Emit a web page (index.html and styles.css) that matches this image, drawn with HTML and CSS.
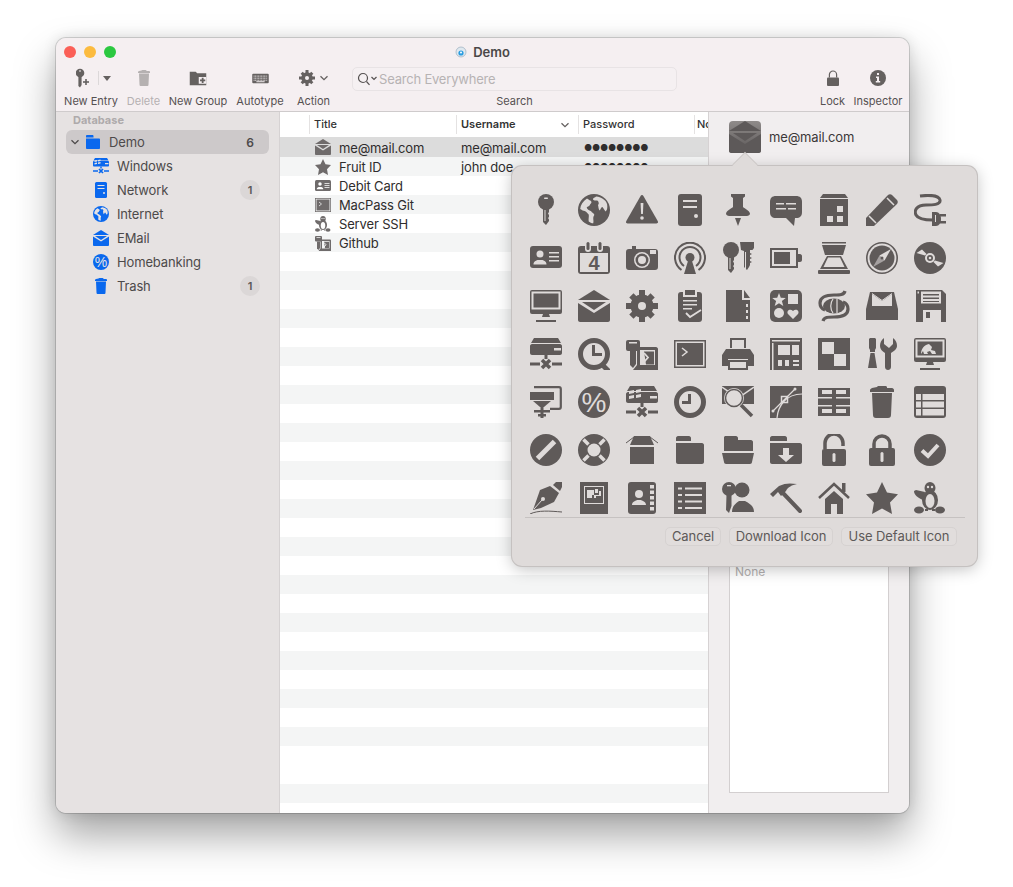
FILE: index.html
```html
<!DOCTYPE html>
<html lang="en">
<head>
<meta charset="utf-8">
<title>Demo</title>
<link rel="stylesheet" href="styles.css">
</head>
<body>
<svg class="defs" xmlns="http://www.w3.org/2000/svg">
<symbol id="key" viewBox="0 0 32 32"><circle cx="16" cy="8" r="8"/><path d="M13 14h6v4l-1 1.500 1 1.500v2l-1 1 1 1.500v1.500l-3 4-3-3z"/><rect class="cut" x="14" y="3.500" width="4" height="1.500" rx=".7"/><rect class="cut" x="14.500" y="16" width="1" height="11"/></symbol>
<symbol id="globe" viewBox="0 0 32 32"><circle cx="16" cy="16" r="16"/><path class="cut" d="M9 4.500C5 7 2.500 11 2.200 15c2 1 3 2 4.500 2 2 1 3 2.500 4 3.500.5 2-.5 4 0 7 1 .8 3 1.800 4.500 1.800 1-3-1-5 1-8 .5-2-2-2-3-4-2-1-4.500-2-4.500-4 1-1 3-1 3.500-3 1-1 2-2 .5-3.500C11 6 10 5 9 4.500zM18 2.500c-1 1.500-3 1-3 3 2 2 3 0 5 1.500 1 2 1 3 0 4 .5 2 .5 4 1.500 5.500 1.500-1 1-3 3-3.500 1 1.500 2 3 3 4.500 1.500-1 1.800-3 1.800-5C29.800 7 24 3 18 2.500z"/></symbol>
<symbol id="warn" viewBox="0 0 32 32"><path d="M16 1c.7 0 1 .4 1.400 1L31.700 27c.7 1.400.2 2.500-1.300 2.500H1.600C.1 29.500-.4 28.400.3 27L14.600 2c.4-.6.7-1 1.400-1z"/><path class="cut" d="M14.600 9h2.800l-.5 11h-1.800z"/><circle class="cut" cx="16" cy="24" r="1.800"/></symbol>
<symbol id="server" viewBox="0 0 32 32"><rect x="4" y="0" width="24" height="32" rx="3"/><rect class="cut" x="9" y="6" width="14" height="2"/><rect class="cut" x="9" y="12" width="14" height="2"/><circle class="cut" cx="22" cy="22" r="2"/></symbol>
<symbol id="pin" viewBox="0 0 32 32"><path d="M9 0h14v2.500l-2 1.500v9c2 2 6 3 7 6.500 0 2-2 2.500-5 2.500H9c-3 0-5-.5-5-2.500 1-3.500 5-4.500 7-6.500V4L9 2.500zM13 24h6l-3 8z"/></symbol>
<symbol id="chat" viewBox="0 0 32 32"><path d="M6 2h20c4 0 6 2 6 6v10c0 4-2 6-6 6h-1l-1 8-8-8H6c-4 0-6-2-6-6V8c0-4 2-6 6-6z"/><rect class="cut" x="6" y="9" width="8" height="1.500"/><rect class="cut" x="16" y="9" width="10" height="1.500"/><rect class="cut" x="6" y="14" width="10" height="1.500"/><rect class="cut" x="18" y="14" width="8" height="1.500"/></symbol>
<symbol id="build" viewBox="0 0 32 32"><path d="M5 0h22l3 4H2zM2 5h28v27H2z"/><rect class="cut" x="19" y="12" width="6" height="6"/><rect class="cut" x="9" y="22" width="6" height="6"/><rect class="cut" x="19" y="22" width="6" height="6"/></symbol>
<symbol id="pencil" viewBox="0 0 32 32"><path d="M0 32v-8L22 1c1-1 3-1 4 0l5 5c1 1 1 3 0 4L8 32z"/><path class="cln" d="M21 4l7 7M3 22l7 7" stroke-width="1.500" fill="none"/></symbol>
<symbol id="plug" viewBox="0 0 32 32"><path class="ln" d="M6 2c8-1 19-1 20 4 1 5-8 5-14 5C2 11 0 17 2 21c2 4 8 5 17 5" stroke-width="3" fill="none"/><path d="M18 18h4c3 0 5 3 5 7s-2 7-5 7h-4z"/><rect x="26" y="20" width="6" height="2.500"/><rect x="26" y="27" width="6" height="2.500"/><rect class="cut" x="21" y="21" width="1" height="7"/></symbol>
<symbol id="idcard" viewBox="0 0 32 32"><rect x="0" y="4" width="32" height="22" rx="3"/><circle class="cut" cx="10" cy="12" r="3.500"/><path class="cut" d="M3.500 22.500c0-3 2-3.500 4-4.500h5c2 1 4 1.500 4 4.500z"/><rect class="cut" x="19" y="10" width="10" height="1.500"/><rect class="cut" x="19" y="14" width="10" height="1.500"/><rect class="cut" x="19" y="18" width="10" height="1.500"/></symbol>
<symbol id="cal" viewBox="0 0 32 32"><rect x="0" y="4" width="32" height="28" rx="3"/><rect class="cut" x="2" y="11" width="28" height="19"/><rect class="cut" x="7" y="0" width="6" height="10" rx="3"/><rect class="cut" x="19" y="0" width="6" height="10" rx="3"/><rect x="8.500" y="0" width="3" height="8" rx="1.500"/><rect x="20.500" y="0" width="3" height="8" rx="1.500"/><text x="16" y="28" class="ict" font-size="20">4</text></symbol>
<symbol id="camera" viewBox="0 0 32 32"><path d="M6 4h4v3h19c2 0 3 1 3 3v15c0 2-1 3-3 3H3c-2 0-3-1-3-3V10c0-2 1-3 3-3h3z"/><circle class="cut" cx="16" cy="18" r="8"/><circle cx="16" cy="18" r="6.500"/><circle class="cut" cx="16" cy="18" r="4"/><rect class="cut" x="24" y="8" width="6" height="4"/></symbol>
<symbol id="cast" viewBox="0 0 32 32"><path class="ln" d="M7.500 28A15 15 0 1 1 24.500 28" stroke-width="2" fill="none"/><path class="ln" d="M10 24A10.500 10.500 0 1 1 22 24" stroke-width="2" fill="none"/><circle cx="16" cy="15.500" r="4.500"/><path d="M14 19h4l4 13H10z"/></symbol>
<symbol id="keys" viewBox="0 0 32 32"><circle cx="9" cy="8" r="8"/><path d="M6 14h6v4l-1 1.500 1 1.500v2l-1 1 1 1.500v1.500l-3 4-3-3z"/><path d="M18 0h14v6l-1.500 2H28v3l2 1-2 1v2l2 1-2 1v2l2 1-2 1v2l-1 2-2 3-3-3V9l-3-1z"/><rect class="cut" x="7.500" y="16" width="1" height="11"/><rect class="cut" x="23" y="10" width="1" height="17"/></symbol>
<symbol id="batt" viewBox="0 0 32 32"><path fill-rule="evenodd" d="M0 6h28v20H0zM2 8v16h24V8z"/><rect x="4" y="10" width="16" height="12"/><path d="M28 12h2c1 0 2 1 2 2v4c0 1-1 2-2 2h-2z"/></symbol>
<symbol id="scan" viewBox="0 0 32 32"><rect x="4" y="0" width="24" height="1.500"/><path d="M4 3h24l-3 10H7z"/><path fill-rule="evenodd" d="M9 14h14l7 13H2zM10 15.500L5.500 25h21L22 15.500z"/><rect x="0" y="28" width="32" height="4" rx="1"/></symbol>
<symbol id="compass" viewBox="0 0 32 32"><circle class="ln" cx="16" cy="16" r="15.200" stroke-width="1.600" fill="none"/><circle cx="16" cy="16" r="12.500"/><path class="cut" d="M25 7l-6.500 11.500-5-5z"/><path class="cut" d="M7 25l6.500-11.500 5 5z" opacity=".55"/><circle cx="16" cy="16" r="1.500"/></symbol>
<symbol id="disc" viewBox="0 0 32 32"><circle cx="16" cy="16" r="16"/><path class="cut" d="M2.500 11L8 7.500l4.500 4.500L11 13.500zM29.500 21L24 24.500 19.500 20l1.500-1.500z"/><circle class="cut" cx="16" cy="16" r="5"/><circle cx="16" cy="16" r="3"/><circle class="cut" cx="16" cy="16" r="1.300"/></symbol>
<symbol id="mon" viewBox="0 0 32 32"><rect x="0" y="0" width="32" height="24" rx="2"/><rect class="cut" x="1.500" y="1.500" width="29" height="18"/><rect x="3.500" y="3.500" width="25" height="14"/><path d="M13 24h6l1 3h-8z"/><rect x="6" y="30" width="20" height="2"/></symbol>
<symbol id="env" viewBox="0 0 32 32"><path d="M16 0l16 10H0z"/><path d="M4 12h24L16 20z"/><path d="M0 13l16 10 16-10v17c0 1-1 2-2 2H2c-1 0-2-1-2-2z"/></symbol>
<symbol id="gear" viewBox="0 0 32 32"><circle cx="16" cy="16" r="11.500"/><rect x="13" y="0" width="6" height="32"/><rect x="0" y="13" width="32" height="6"/><rect x="13" y="1" width="6" height="30" transform="rotate(45 16 16)"/><rect x="13" y="1" width="6" height="30" transform="rotate(-45 16 16)"/><circle class="cut" cx="16" cy="16" r="4"/></symbol>
<symbol id="clip" viewBox="0 0 32 32"><rect x="4" y="2" width="24" height="30" rx="3"/><rect class="cut" x="9" y="0" width="14" height="7"/><rect x="11" y="0" width="10" height="5"/><rect class="cut" x="9" y="10" width="14" height="1.500"/><rect class="cut" x="9" y="14" width="14" height="1.500"/><rect class="cut" x="9" y="18" width="9" height="1.500"/><path class="cln" d="M12 23l4 4 11-7" stroke-width="1.800" fill="none"/></symbol>
<symbol id="doc" viewBox="0 0 32 32"><path d="M4 0h16v10h8v22H4zM22 0l6 8h-6z"/><rect class="cut" x="24" y="14" width="2" height="3"/><rect class="cut" x="24" y="20" width="2" height="3"/><rect class="cut" x="24" y="26" width="2" height="3"/></symbol>
<symbol id="tile" viewBox="0 0 32 32"><rect width="32" height="32" rx="5"/><path class="cut" d="M9 3l1.800 4.800 5 .2-3.900 3.100 1.400 4.900L9 13.200 4.700 16l1.400-4.900L2.200 8l5-.2z"/><rect class="cut" x="18" y="4" width="10" height="10"/><circle class="cut" cx="9" cy="23" r="5"/><path class="cut" d="M23 29l-5-5c-2-3 2-6 5-3 3-3 7 0 5 3z"/></symbol>
<symbol id="swirl" viewBox="0 0 32 32"><path class="ln" d="M27 1c-1 4-5 4-11 4C7 5 2 8 2 13c0 3 2 6 5 7" stroke-width="3.200" fill="none"/><path class="ln" d="M5 31c1-4 5-4 11-4 9 0 14-3 14-8 0-3-2-6-5-7" stroke-width="3.200" fill="none"/><ellipse cx="16" cy="16" rx="11" ry="7.500"/><path class="cln" d="M15 9c-3 4-3 10 0 14M19 9v14" stroke-width="1.200" fill="none"/></symbol>
<symbol id="tray" viewBox="0 0 32 32"><path d="M4 2h24l4 17v11H0V19z"/><path class="cut" d="M6 4l10 7 10-7v12H6z"/><path class="cln" d="M6 3.500l10 7 10-7" stroke-width="1" fill="none"/></symbol>
<symbol id="floppy" viewBox="0 0 32 32"><path d="M2 0h26l4 4v28H2z"/><rect class="cut" x="7" y="1.500" width="20" height="12"/><rect x="9" y="4" width="16" height="1.500"/><rect x="9" y="7.500" width="16" height="1.500"/><rect x="9" y="11" width="16" height="1"/><rect class="cut" x="9" y="20" width="18" height="12"/><rect x="12" y="22" width="4" height="6"/><rect class="cut" x="3.500" y="1.500" width="1.500" height="2"/></symbol>
<symbol id="hddx" viewBox="0 0 32 32"><path d="M4 0h24l3 5H1z"/><path d="M2 6h28c1 0 2 1 2 2v7c0 1-1 2-2 2H2c-1 0-2-1-2-2V8c0-1 1-2 2-2z"/><rect class="cut" x="24" y="10" width="7" height="2.500"/><rect x="14.500" y="17" width="3" height="4"/><rect x="0" y="24.500" width="10" height="3"/><rect x="22" y="24.500" width="10" height="3"/><path class="ln" d="M12 22l8 8M20 22l-8 8" stroke-width="3.500" fill="none"/></symbol>
<symbol id="qclock" viewBox="0 0 32 32"><circle class="ln" cx="16" cy="16" r="13.500" stroke-width="5" fill="none"/><rect x="14" y="7" width="3" height="11"/><rect x="14" y="15" width="10" height="3"/><path d="M26 25l6 6v1h-6l-4-4z"/></symbol>
<symbol id="keyterm" viewBox="0 0 32 32"><rect x="0" y="2" width="14" height="11" rx="2"/><rect class="cut" x="3" y="4" width="8" height="1.500"/><path d="M4 13h6v13l-3 4-3-3z"/><path fill-rule="evenodd" d="M11 9h19c1 0 2 1 2 2v21H7l4-5zM14 12v15h15V12z"/><path d="M18 13.500h10v13H20z"/><path class="cln" d="M18 15l4 4.500-4 4.500" stroke-width="1.800" fill="none"/></symbol>
<symbol id="term" viewBox="0 0 32 32"><path fill-rule="evenodd" d="M0 2h32v28H0zM1.500 3.500v25h29v-25z"/><rect x="3" y="5" width="26" height="22"/><path class="cln" d="M8 10l5 4-5 4" stroke-width="1.500" fill="none"/></symbol>
<symbol id="printer" viewBox="0 0 32 32"><path class="ln" d="M9 10V1h14v9" stroke-width="2" fill="none"/><path d="M4 11h24l4 6v11h-6V21H6v7H0V17z"/><path fill-rule="evenodd" d="M6 22h20v10H6zM8 24v6h16v-6z"/></symbol>
<symbol id="grid" viewBox="0 0 32 32"><rect width="32" height="32"/><rect class="cut" x="2" y="2" width="28" height="1.500"/><rect class="cut" x="2" y="5" width="1.500" height="27"/><rect class="cut" x="8" y="7" width="12" height="10"/><rect class="cut" x="22" y="7" width="7" height="10"/><rect class="cut" x="8" y="22" width="4" height="6"/><rect class="cut" x="15" y="22" width="4" height="6"/><rect class="cut" x="23" y="22" width="6" height="2"/><rect class="cut" x="23" y="26" width="6" height="2"/></symbol>
<symbol id="check2" viewBox="0 0 32 32"><rect width="32" height="32"/><rect class="cut" x="4" y="4" width="12" height="12"/><rect class="cut" x="16" y="16" width="12" height="12"/></symbol>
<symbol id="tools" viewBox="0 0 32 32"><path d="M4 0h5l1 1v9l-1 2v2H4v-2L3 10V1zM4.500 15h4l2.500 15H2z"/><path d="M18 0c-3 2-4 5-4 8 0 3 2 5 5 7v14c0 4 6 4 6 0V15c3-2 6-4 6-7 0-3-1-6-4-8v6l-4 4-5-4z"/></symbol>
<symbol id="mongauge" viewBox="0 0 32 32"><use href="#mon" width="32" height="32"/><path class="cut" d="M7 16c0-5 3-9 8-10l3 3-1 3 4 1 1 3h-4l-2-3-3 1 1 2h-4l-1-3z"/></symbol>
<symbol id="bracket" viewBox="0 0 32 32"><path class="ln" d="M4 1.200h25c1 0 1.800.8 1.800 1.800v18c0 1-.8 1.800-1.800 1.800h-9" stroke-width="2.200" fill="none"/><rect x="0" y="6" width="24" height="8"/><path d="M3 15h18l-7 6h-4z"/><rect x="10.500" y="20" width="3" height="12"/><rect x="4" y="24" width="16" height="2.500"/><rect x="8" y="28" width="8" height="2.500"/></symbol>
<symbol id="pct" viewBox="0 0 32 32"><circle cx="16" cy="16" r="16"/><text x="16" y="26" class="ict cutt" font-size="28">%</text></symbol>
<symbol id="winx" viewBox="0 0 32 32"><use href="#hddx" width="32" height="32"/><path class="cut" d="M3 5l5-1v3l-5 1zM10 4l5-1v3l-5 1zM3 10l5-1v3l-5 1zM10 9l5-1v3l-5 1z"/></symbol>
<symbol id="clock" viewBox="0 0 32 32"><circle class="ln" cx="16" cy="16" r="13.500" stroke-width="5" fill="none"/><rect x="14" y="8" width="3" height="10"/><rect x="8" y="15" width="9" height="3"/></symbol>
<symbol id="envmag" viewBox="0 0 32 32"><path d="M0 0h32v18H0z"/><path class="cln" d="M0 1l16 11L32 1" stroke-width="1.500" fill="none"/><circle class="cut" cx="12" cy="12" r="10"/><circle class="ln" cx="12" cy="12" r="8.500" stroke-width="1.500" fill="none"/><path class="cln" d="M6 9l6 5 6-5" stroke-width="1.200" fill="none"/><path class="ln" d="M19 19l11 11" stroke-width="3.500" fill="none"/></symbol>
<symbol id="bez" viewBox="0 0 32 32"><rect width="32" height="32"/><path class="cln" d="M3 25L25 3M7 32C8 20 16 8 32 8" stroke-width="1.200" fill="none"/><rect class="cln" x="11.500" y="10.500" width="6" height="6" stroke-width="1.500" fill="none"/><circle class="cut" cx="3" cy="25" r="1.500"/><circle class="cut" cx="25" cy="3" r="1.500"/></symbol>
<symbol id="brick" viewBox="0 0 32 32"><rect y="2" width="32" height="28"/><rect class="cut" x="4" y="4" width="10" height="4"/><rect class="cut" x="18" y="4" width="10" height="4"/><rect class="cut" x="0" y="11" width="14" height="1.500"/><rect class="cut" x="18" y="11" width="14" height="1.500"/><rect class="cut" x="0" y="19" width="14" height="1.500"/><rect class="cut" x="18" y="19" width="14" height="1.500"/><rect class="cut" x="4" y="23" width="10" height="4"/><rect class="cut" x="18" y="23" width="10" height="4"/></symbol>
<symbol id="trash" viewBox="0 0 32 32"><path d="M11 1c0-.5 1-1 2-1h6c1 0 2 .5 2 1v1h5c1 0 2 1 2 2v2H4V4c0-1 1-1 2-2z"/><path d="M6 7h20l-1 22c0 2-1 3-3 3H10c-2 0-3-1-3-3z"/></symbol>
<symbol id="table" viewBox="0 0 32 32"><rect width="32" height="32" rx="3"/><rect class="cut" x="2" y="8" width="5" height="6"/><rect class="cut" x="8.500" y="8" width="21.500" height="6"/><rect class="cut" x="2" y="15.500" width="5" height="6"/><rect class="cut" x="8.500" y="15.500" width="21.500" height="6"/><rect class="cut" x="2" y="23" width="5" height="6.500"/><rect class="cut" x="8.500" y="23" width="21.500" height="6.500"/></symbol>
<symbol id="no" viewBox="0 0 32 32"><circle cx="16" cy="16" r="16"/><path class="cln" d="M7.500 24.500L24.500 7.500" stroke-width="5" fill="none"/></symbol>
<symbol id="buoy" viewBox="0 0 32 32"><circle cx="16" cy="16" r="16"/><circle class="cut" cx="16" cy="16" r="6.500"/><path class="cln" d="M5.500 5.500l5 5M26.500 5.500l-5 5M5.500 26.500l5-5M26.500 26.500l-5-5" stroke-width="3.500" fill="none"/></symbol>
<symbol id="box" viewBox="0 0 32 32"><path d="M8 2h16l4 9H4z"/><path class="ln" d="M8 3L0 9M24 3l8 6" stroke-width="1" fill="none"/><rect x="4" y="13" width="24" height="17"/></symbol>
<symbol id="folder" viewBox="0 0 32 32"><path d="M4 2h11c1 0 2 1 2 2v3H2V4c0-1 1-2 2-2z"/><path d="M2 9h26c1 0 2 1 2 2v17c0 1-1 2-2 2H4c-1 0-2-1-2-2z"/></symbol>
<symbol id="folderopen" viewBox="0 0 32 32"><path d="M3 2h11c1 0 2 1 2 2v2h13c1 0 2 1 2 2v9H2V3z"/><path d="M0 19h32l-2 9c0 1-1 2-2 2H4c-1 0-2-1-2-2z"/></symbol>
<symbol id="folderdl" viewBox="0 0 32 32"><path d="M2 2h13c1 0 2 1 2 2v3H0V4c0-1 1-2 2-2z"/><path d="M0 9h30c1 0 2 1 2 2v17c0 1-1 2-2 2H2c-1 0-2-1-2-2z"/><path class="cut" d="M13 14h6v7h5l-8 7-8-7h5z"/></symbol>
<symbol id="lockopen" viewBox="0 0 32 32"><rect x="4" y="15" width="24" height="17" rx="2"/><path class="ln" d="M7 15V9a8.700 8.700 0 0 1 18 0v3" stroke-width="3.500" fill="none"/><rect class="cut" x="14.500" y="19" width="3" height="9" rx="1.500"/></symbol>
<symbol id="lock" viewBox="0 0 32 32"><rect x="3" y="14" width="26" height="18" rx="2"/><path class="ln" d="M8 14V10a8 8 0 0 1 16 0v4" stroke-width="3.500" fill="none"/><rect class="cut" x="14.500" y="18" width="3" height="10" rx="1.500"/></symbol>
<symbol id="ok" viewBox="0 0 32 32"><circle cx="16" cy="16" r="16"/><path class="cln" d="M8 16.500l6 5.500 10-11" stroke-width="4" fill="none"/></symbol>
<symbol id="pen" viewBox="0 0 32 32"><path d="M26 0h6v5l-2 4-7-6z"/><path d="M20 4l9 7-5 9-13 6-8 2 7-20z"/><path class="cln" d="M4 27l8-9" stroke-width="1" fill="none"/><circle class="cut" cx="13" cy="17" r="2"/><path class="ln" d="M0 32c8-4 20-3 32-2" stroke-width="1" fill="none"/></symbol>
<symbol id="photo" viewBox="0 0 32 32"><rect x="2" width="28" height="32"/><rect class="cut" x="6" y="4" width="20" height="18"/><rect x="7" y="5" width="18" height="16"/><path class="cut" d="M9 8h7v5h-2v3H9zM17 7h3v4h-3zM21 9h2v5h-5v2h-2v-3h5z"/></symbol>
<symbol id="contact" viewBox="0 0 32 32"><rect x="2" width="28" height="32" rx="3"/><circle class="cut" cx="13" cy="12" r="4"/><path class="cut" d="M6 23c0-3 3-4 5-5h4c2 1 5 2 5 5z"/><rect class="cut" x="24" y="3" width="4" height="3.500"/><rect class="cut" x="24" y="8.500" width="4" height="3.500"/><rect class="cut" x="24" y="14" width="4" height="3.500"/><rect class="cut" x="24" y="19.500" width="4" height="3.500"/><rect class="cut" x="24" y="25" width="4" height="3.500"/></symbol>
<symbol id="list" viewBox="0 0 32 32"><rect width="32" height="32"/><rect class="cut" x="4" y="5.500" width="4" height="2"/><rect class="cut" x="11" y="5.500" width="17" height="2"/><rect class="cut" x="4" y="12" width="4" height="2"/><rect class="cut" x="11" y="12" width="17" height="2"/><rect class="cut" x="4" y="18.500" width="4" height="2"/><rect class="cut" x="11" y="18.500" width="17" height="2"/><rect class="cut" x="4" y="25" width="4" height="2"/><rect class="cut" x="11" y="25" width="17" height="2"/></symbol>
<symbol id="keyperson" viewBox="0 0 32 32"><circle cx="7" cy="7" r="7"/><path d="M4.500 12h5v12l-2.500 7-3-3z"/><rect class="cut" x="5" y="3" width="4" height="1.300"/><circle cx="20" cy="8" r="7.500"/><path d="M10 30c0-6 4-9 7-11h6c4 2 9 5 9 11z"/></symbol>
<symbol id="hammer" viewBox="0 0 32 32"><path d="M0 12L9 4c6-3 11-3 18-2-5 1-9 3-11 7l-5 5-3-4-5 5z"/><path class="ln" d="M12 10l18 19" stroke-width="4" stroke-linecap="round" fill="none"/></symbol>
<symbol id="house" viewBox="0 0 32 32"><path class="ln" d="M1 16L16 2l15 14" stroke-width="2.500" fill="none"/><rect x="24" y="1" width="3.500" height="9"/><path d="M7 17l9-8 9 8v15h-6V22h-6v10H7z"/></symbol>
<symbol id="star" viewBox="0 0 32 32"><path d="M16 0l5 10.500 11 1.700-8 8.200L26 32l-10-5.500L6 32l2-11.600-8-8.200 11-1.700z"/></symbol>
<symbol id="tux" viewBox="0 0 32 32"><ellipse cx="16" cy="6" rx="5.500" ry="6"/><ellipse cx="16" cy="18" rx="8" ry="10"/><ellipse class="cut" cx="16" cy="19" rx="4.500" ry="7"/><path d="M11 10L2 8 0 9c0 4 4 7 9 9z"/><ellipse cx="5" cy="28" rx="5" ry="3.500"/><ellipse cx="26" cy="28" rx="5" ry="3.500"/><path d="M11 27h3v2h-3zM18 27h3v2h-3z"/><circle class="cut" cx="14" cy="5" r="1.200"/><circle class="cut" cx="18" cy="5" r="1.200"/></symbol>
<symbol id="keyplus" viewBox="0 0 18 20"><circle cx="4" cy="5" r="4.300"/><path d="M2.400 8h3.200v9l-1.600 2.500L2.400 18z"/><rect class="cut" x="3" y="2.500" width="2" height="1"/><rect x="9.200" y="11" width="1.600" height="6"/><rect x="7" y="13.200" width="6" height="1.600"/></symbol>
<symbol id="folderplus" viewBox="0 0 24 20"><path d="M1 1h8l2 2h12v16H1z"/><rect class="cut" x="13" y="8" width="10" height="9"/><rect x="17" y="9" width="2.400" height="7"/><rect x="14.700" y="11.300" width="7" height="2.400"/></symbol>
<symbol id="keyboard" viewBox="0 0 24 16"><rect y="1" width="24" height="14" rx="1.500"/><path class="cln" d="M2 4.500h20M2 7.500h20M2 10.500h20" stroke-width="1.400" stroke-dasharray="1.400 .8" fill="none"/><rect class="cut" x="6" y="12" width="12" height="1.400"/></symbol>
<symbol id="info" viewBox="0 0 16 16"><circle cx="8" cy="8" r="8"/><rect class="cut" x="7" y="3" width="2" height="2"/><path class="cut" d="M6 6.500h3V11h1.200v1.500H5.800V11H7V8H6z"/></symbol>
<symbol id="locktool" viewBox="0 0 16 16"><rect x="2" y="7.500" width="12" height="8.500" rx="1"/><path class="ln" d="M4.400 7.500V4.600a3.600 3.600 0 0 1 7.200 0v2.900" stroke-width="1.200" fill="none"/></symbol>
</svg>

<main class="window">
  <header class="chrome">
    <div class="titlebar">
      <div class="lights"><i class="light red"></i><i class="light amber"></i><i class="light green"></i></div>
      <div class="wintitle"><svg class="appicon" viewBox="0 0 12 12"><circle cx="6" cy="6" r="5" fill="#dfe8ef" stroke="#8da3b3" stroke-width=".6"/><circle cx="6" cy="7" r="2.600" fill="#2a9ce0"/><circle cx="6" cy="6.600" r="1" fill="#fff"/></svg><span>Demo</span></div>
      <div></div>
    </div>
    <div class="toolbar">
      <div class="tool w-entry"><div class="ticon"><svg class="i-key"><use href="#keyplus"/></svg><i class="tsep"></i><i class="caret"></i></div><span>New Entry</span></div>
      <div class="tool w-delete off"><div class="ticon"><svg class="i16"><use href="#trash"/></svg></div><span>Delete</span></div>
      <div class="tool w-group"><div class="ticon"><svg class="i-fold"><use href="#folderplus"/></svg></div><span>New Group</span></div>
      <div class="tool w-auto"><div class="ticon"><svg class="i-kb"><use href="#keyboard"/></svg></div><span>Autotype</span></div>
      <div class="tool w-action"><div class="ticon"><svg class="i16"><use href="#gear"/></svg><svg class="chev" viewBox="0 0 10 6"><path d="M1.500 1.200L5 4.700l3.500-3.500"/></svg></div><span>Action</span></div>
      <div class="tool w-search"><div class="searchfield"><svg class="mag" viewBox="0 0 20 14"><circle cx="6" cy="6" r="4.500"/><path d="M9.500 9.500l3 3.300M14.500 5l2.500 2.500L19.500 5"/></svg><span>Search Everywhere</span></div><span>Search</span></div>
      <div class="tool w-lock"><div class="ticon"><svg class="i16"><use href="#locktool"/></svg></div><span>Lock</span></div>
      <div class="tool w-insp"><div class="ticon"><svg class="i16"><use href="#info"/></svg></div><span>Inspector</span></div>
    </div>
  </header>

  <div class="body">
    <nav class="sidebar">
      <div class="sidehead">Database</div>
      <div class="siderow root"><svg class="chev down" viewBox="0 0 10 6"><path d="M1.500 1.200L5 4.700l3.500-3.500"/></svg><svg class="sicon"><use href="#folder"/></svg><span class="sname">Demo</span><b class="rootcount">6</b></div>
      <div class="siderow child"><svg class="sicon"><use href="#winx"/></svg><span class="sname">Windows</span></div>
      <div class="siderow child"><svg class="sicon"><use href="#server"/></svg><span class="sname">Network</span><b class="badge">1</b></div>
      <div class="siderow child"><svg class="sicon"><use href="#globe"/></svg><span class="sname">Internet</span></div>
      <div class="siderow child"><svg class="sicon"><use href="#env"/></svg><span class="sname">EMail</span></div>
      <div class="siderow child"><svg class="sicon"><use href="#pct"/></svg><span class="sname">Homebanking</span></div>
      <div class="siderow child"><svg class="sicon"><use href="#trash"/></svg><span class="sname">Trash</span><b class="badge">1</b></div>
    </nav>

    <section class="entries">
      <div class="thead"><div></div><div class="th">Title</div><div class="th user">Username<svg class="chev" viewBox="0 0 10 6"><path d="M1.500 1.200L5 4.700l3.500-3.500"/></svg></div><div class="th">Password</div><div class="th last">Notes</div></div>
      <div class="rows">
        <div class="row sel"><div class="c-title"><svg class="ricon"><use href="#env"/></svg>me@mail.com</div><div>me@mail.com</div><div class="dots">●●●●●●●●</div></div>
        <div class="row"><div class="c-title"><svg class="ricon"><use href="#star"/></svg>Fruit ID</div><div>john doe</div><div class="dots">●●●●●●●●</div></div>
        <div class="row"><div class="c-title"><svg class="ricon"><use href="#idcard"/></svg>Debit Card</div></div>
        <div class="row"><div class="c-title"><svg class="ricon"><use href="#term"/></svg>MacPass Git</div></div>
        <div class="row"><div class="c-title"><svg class="ricon"><use href="#tux"/></svg>Server SSH</div></div>
        <div class="row"><div class="c-title"><svg class="ricon"><use href="#keyterm"/></svg>Github</div></div>
        <div class="row"></div><div class="row"></div><div class="row"></div><div class="row"></div><div class="row"></div><div class="row"></div><div class="row"></div><div class="row"></div><div class="row"></div><div class="row"></div><div class="row"></div><div class="row"></div><div class="row"></div><div class="row"></div><div class="row"></div><div class="row"></div><div class="row"></div><div class="row"></div><div class="row"></div><div class="row"></div><div class="row"></div><div class="row"></div><div class="row"></div><div class="row"></div><div class="row"></div>
        <div class="row"></div><div class="row tall"></div><div class="row"></div><div class="row"></div>
      </div>
    </section>

    <aside class="inspector">
      <div class="insphead"><div class="bigicon"><svg class="i-big"><use href="#env"/></svg></div><span>me@mail.com</span></div>
      <div class="notes">None</div>
    </aside>
  </div>

  <div class="popover">
    <div class="icongrid">
      <svg><use href="#key"/></svg><svg><use href="#globe"/></svg><svg><use href="#warn"/></svg><svg><use href="#server"/></svg><svg><use href="#pin"/></svg><svg><use href="#chat"/></svg><svg><use href="#build"/></svg><svg><use href="#pencil"/></svg><svg><use href="#plug"/></svg>
      <svg><use href="#idcard"/></svg><svg><use href="#cal"/></svg><svg><use href="#camera"/></svg><svg><use href="#cast"/></svg><svg><use href="#keys"/></svg><svg><use href="#batt"/></svg><svg><use href="#scan"/></svg><svg><use href="#compass"/></svg><svg><use href="#disc"/></svg>
      <svg><use href="#mon"/></svg><svg><use href="#env"/></svg><svg><use href="#gear"/></svg><svg><use href="#clip"/></svg><svg><use href="#doc"/></svg><svg><use href="#tile"/></svg><svg><use href="#swirl"/></svg><svg><use href="#tray"/></svg><svg><use href="#floppy"/></svg>
      <svg><use href="#hddx"/></svg><svg><use href="#qclock"/></svg><svg><use href="#keyterm"/></svg><svg><use href="#term"/></svg><svg><use href="#printer"/></svg><svg><use href="#grid"/></svg><svg><use href="#check2"/></svg><svg><use href="#tools"/></svg><svg><use href="#mongauge"/></svg>
      <svg><use href="#bracket"/></svg><svg><use href="#pct"/></svg><svg><use href="#winx"/></svg><svg><use href="#clock"/></svg><svg><use href="#envmag"/></svg><svg><use href="#bez"/></svg><svg><use href="#brick"/></svg><svg><use href="#trash"/></svg><svg><use href="#table"/></svg>
      <svg><use href="#no"/></svg><svg><use href="#buoy"/></svg><svg><use href="#box"/></svg><svg><use href="#folder"/></svg><svg><use href="#folderopen"/></svg><svg><use href="#folderdl"/></svg><svg><use href="#lockopen"/></svg><svg><use href="#lock"/></svg><svg><use href="#ok"/></svg>
      <svg><use href="#pen"/></svg><svg><use href="#photo"/></svg><svg><use href="#contact"/></svg><svg><use href="#list"/></svg><svg><use href="#keyperson"/></svg><svg><use href="#hammer"/></svg><svg><use href="#house"/></svg><svg><use href="#star"/></svg><svg><use href="#tux"/></svg>
    </div>
    <div class="popfoot">
      <button class="pbtn b-cancel">Cancel</button><button class="pbtn b-dl">Download Icon</button><button class="pbtn b-def">Use Default Icon</button>
    </div>
  </div>
</main>
</body>
</html>
```
FILE: styles.css
```css
* { box-sizing: border-box; }
html, body { margin: 0; height: 887px; overflow: hidden; background: #fff; }
body { padding: 38px 0 0 56px; font-family: Inter, "Liberation Sans", sans-serif; color: #3b3838; }
.defs { display: none; }
symbol { overflow: visible; }
svg { fill: currentColor; display: block; flex: none; }
.cut { fill: var(--cut, #dfdbda); }
.cln { stroke: var(--cut, #dfdbda); }
.ln { stroke: currentColor; }
.ict { font-family: "Liberation Sans", sans-serif; font-weight: 700; text-anchor: middle; }
.cutt { fill: var(--cut, #dfdbda); font-weight: 400; }

.window { position: relative; width: 853px; height: 775px; border-radius: 10px; background: #f1eeef; box-shadow: 0 0 0 1px rgba(0,0,0,.14), 0 22px 42px rgba(0,0,0,.36), 0 0 14px rgba(0,0,0,.12); }
.chrome { height: 74px; background: #f5eff1; border-bottom: 1px solid #cfcbcc; border-radius: 10px 10px 0 0; --cut: #f5eff1; }
.titlebar { height: 28px; display: grid; grid-template-columns: 1fr auto 1fr; align-items: center; padding: 0 8px; }
.lights { display: flex; gap: 8px; }
.light { width: 12px; height: 12px; border-radius: 50%; }
.red { background: #fb5f57; }
.amber { background: #fcbb3f; }
.green { background: #2bc840; }
.wintitle { display: flex; align-items: center; gap: 6px; font-size: 13px; font-weight: 600; color: #4a4747; }
.appicon { width: 12px; height: 12px; }

.toolbar { display: flex; padding-left: 8px; padding-right: 6px; height: 46px; }
.tool { display: flex; flex-direction: column; align-items: center; font-size: 11px; color: #555151; white-space: nowrap; }
.tool > span { height: 14px; line-height: 14px; margin-top: 4px; }
.ticon { height: 24px; display: flex; align-items: center; justify-content: center; gap: 4px; color: #656160; }
.w-entry { width: 54px; }
.w-delete { width: 33px; margin-left: 9px; }
.w-group { width: 58px; margin-left: 9px; }
.w-auto { width: 48px; margin-left: 9px; }
.w-action { width: 33px; margin-left: 13px; }
.w-search { width: 325px; margin-left: 22px; }
.w-lock { width: 25px; margin-left: auto; }
.w-insp { width: 50px; margin-left: 8px; }
.off, .off .ticon { color: #b5b1b1; }
.i-key { width: 18px; height: 20px; margin-left: 4px; }
.tsep { width: 1px; height: 14px; background: #dcd8d9; }
.caret { width: 0; height: 0; border-left: 4px solid transparent; border-right: 4px solid transparent; border-top: 5px solid #656160; }
.i-fold { width: 18px; height: 15px; }
.i-kb { width: 17px; height: 11px; }
.i16 { width: 16px; height: 16px; }
.chev { width: 10px; height: 6px; fill: none; stroke: #656160; stroke-width: 1.300; }
.searchfield { width: 325px; height: 24px; margin-top: 1px; margin-bottom: -1px; border: 1px solid #e8e3e5; border-radius: 5px; display: flex; align-items: center; gap: 2px; padding-left: 4px; font-size: 13px; letter-spacing: -.2px; color: #b7b3b4; background: #f5f0f2; }
.mag { width: 20px; height: 14px; fill: none; stroke: #555151; stroke-width: 1.200; }

.body { height: 701px; display: flex; overflow: hidden; border-radius: 0 0 10px 10px; }
.sidebar { width: 224px; flex: none; background: #e6e2e2; border-right: 1px solid #d6d2d3; --cut: #e6e2e2; font-size: 13px; letter-spacing: -.15px; color: #4d4a4a; }
.sidehead { height: 18px; padding-left: 17px; font-size: 11px; font-weight: 700; line-height: 16px; letter-spacing: 0; color: #aeaaab; }
.siderow { height: 24px; margin: 0 10px; display: flex; align-items: center; }
.root { background: #cdc9ca; border-radius: 6px; padding-left: 4px; --cut: #cdc9ca; }
.root .chev { margin-right: 5px; stroke: #4d4a4a; }
.child { padding-left: 27px; }
.sicon { width: 16px; height: 16px; color: #0a68ee; margin-right: 8px; }
.sname { flex: 1; }
.rootcount { width: 20px; margin-right: 9px; text-align: center; font-size: 12px; font-weight: 600; }
.badge { width: 20px; height: 20px; margin-right: 9px; border-radius: 50%; background: #dbd7d7; text-align: center; font-size: 11px; line-height: 20px; font-weight: 600; color: #5a5656; }

.entries { width: 428px; flex: none; background: #fff; overflow: hidden; color: #2f2d2d; font-size: 13px; letter-spacing: -.15px; --cut: #fff; }
.thead { height: 25px; display: grid; grid-template-columns: 29px 147px 122px 116px 14px; align-items: center; letter-spacing: 0; }
.th { height: 19px; border-left: 1px solid #e4e2e2; padding-left: 4px; font-size: 11px; line-height: 19px; font-weight: 500; color: #333; display: flex; align-items: center; overflow: hidden; white-space: nowrap; letter-spacing: 0; }
.user { justify-content: space-between; padding-right: 8px; font-weight: 600; }
.th.last { padding-left: 2px; }
.rows { display: flex; flex-direction: column; }
.row { height: 19px; flex: none; padding-top: 1px; display: grid; grid-template-columns: 177px 123px 1fr; align-items: center; line-height: 18px; }
.row > div:not(.c-title) { padding-left: 4px; }
.row:nth-child(even) { background: #f4f5f5; --cut: #f4f5f5; }
.row.sel { height: 20px; background: #dcdcdc; --cut: #dcdcdc; }
.row.tall { height: 38px; }
.c-title { display: flex; align-items: center; padding-left: 35px; white-space: nowrap; }
.ricon { width: 16px; height: 16px; margin-right: 8px; margin-top: -1px; color: #6f6b6b; }
.dots { font-size: 9px; letter-spacing: -.2px; }

.inspector { width: 201px; flex: none; background: #f1eeef; border-left: 1px solid #d6d2d3; padding: 9px 20px 0; font-size: 13px; letter-spacing: -.15px; color: #3b3838; }
.insphead { display: flex; align-items: center; gap: 8px; }
.bigicon { width: 32px; height: 32px; border-radius: 4px; background: linear-gradient(#8f8b8a, #5b5757); --cut: #a5a1a0; color: #5d5959; }
.i-big { width: 32px; height: 32px; }
.notes { width: 160px; height: 233px; margin-top: 407px; background: #fff; border: 1px solid #d3cfd0; padding: 4px 5px; font-size: 12px; line-height: 14px; letter-spacing: 0; color: #b3b0b0; }

.popover { position: absolute; left: 456px; top: 128px; width: 465px; height: 400px; background: #dfdbda; border-radius: 10px; box-shadow: 0 0 0 1px #c5c1c0, 0 3px 16px rgba(0,0,0,.25); padding: 20px 12px 0 10px; color: #5f5a59; }
.popover::before { content: ""; position: absolute; left: 224px; top: -9px; width: 18px; height: 18px; background: #dfdbda; transform: rotate(45deg); box-shadow: -1px -1px 0 #cdc9c8; }
.icongrid { position: relative; height: 330px; overflow: hidden; display: grid; grid-template-columns: repeat(9, 48px); grid-auto-rows: 48px; }
.icongrid svg { width: 32px; height: 32px; margin: 8px; }
.popfoot { position: relative; border-top: 1px solid #c6c2c1; margin: 1px 0 0 3px; display: flex; justify-content: flex-end; gap: 8px; padding-top: 9px; padding-right: 8px; }
.pbtn { height: 19px; padding: 0; border: 1px solid #d6d2d1; border-radius: 5px; background: #e1dddc; font: 13px/17px Inter, "Liberation Sans", sans-serif; letter-spacing: -.07px; color: #5d5958; text-align: center; }
.b-cancel { width: 56px; }
.b-dl { width: 104px; }
.b-def { width: 116px; }
```
